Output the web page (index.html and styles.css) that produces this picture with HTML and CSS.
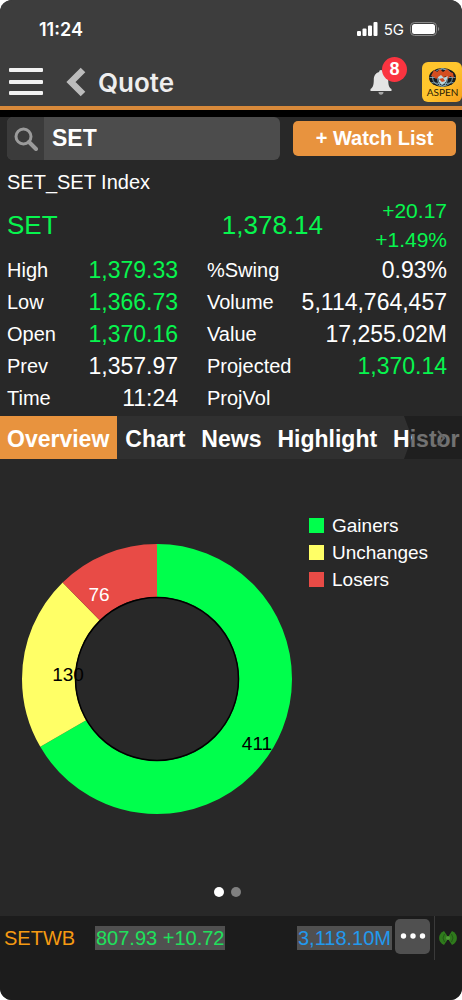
FILE: index.html
```html
<!DOCTYPE html>
<html lang="en">
<head>
    <meta charset="UTF-8">
    <meta name="viewport" content="width=device-width, initial-scale=1.0">
    <title>Quote</title>
    <link rel="stylesheet" href="styles.css">
</head>
<body>
<div class="screen">

    <header class="header">
        <div class="status-bar">
            <span class="clock">11:24</span>
            <div class="status-icons">
                <svg width="21" height="14" viewBox="0 0 21 14" fill="#fff" aria-hidden="true">
                    <rect x="0" y="9" width="4" height="5" rx="1"/>
                    <rect x="5.5" y="6.5" width="4" height="7.5" rx="1"/>
                    <rect x="11" y="3.5" width="4" height="10.5" rx="1"/>
                    <rect x="16.5" y="0" width="4" height="14" rx="1"/>
                </svg>
                <span class="network">5G</span>
                <svg width="30" height="14" viewBox="0 0 30 14" aria-hidden="true">
                    <rect x="0.5" y="0.5" width="26" height="13" rx="4" fill="none" stroke="#888"/>
                    <rect x="2" y="2" width="23" height="10" rx="2.5" fill="#fff"/>
                    <path d="M28 5c1.6.6 1.6 3.4 0 4z" fill="#888"/>
                </svg>
            </div>
        </div>

        <div class="nav">
            <button class="icon-button" aria-label="Menu">
                <svg width="34" height="28" viewBox="0 0 34 28" fill="#f2f2f2">
                    <rect x="0" y="0" width="34" height="4" rx="1"/>
                    <rect x="0" y="12" width="34" height="4" rx="1"/>
                    <rect x="0" y="23" width="34" height="4" rx="1"/>
                </svg>
            </button>
            <button class="icon-button back" aria-label="Back">
                <svg width="20" height="30" viewBox="0 0 20 30">
                    <path d="M17 3 5 15l12 12" fill="none" stroke="#bcbcbc" stroke-width="6.5"/>
                </svg>
            </button>
            <h1>Quote</h1>
            <button class="icon-button bell" aria-label="Notifications">
                <svg width="22" height="25" viewBox="0 0 22 25" fill="#e4e4e4">
                    <path d="M11 0c1.200 0 1.800.8 1.900 1.900 3.700 1 5.300 4 5.300 7.600 0 6 1 8 3.300 9.600V21H.5v-1.900C2.800 17.500 3.800 15.500 3.800 9.500c0-3.600 1.600-6.600 5.300-7.600C9.200.8 9.800 0 11 0z"/>
                    <path d="M8.500 22h5c0 1.700-1.100 2.700-2.500 2.700S8.500 23.700 8.500 22z" fill="#a5a5a5"/>
                </svg>
                <span class="badge">8</span>
            </button>
            <a class="logo" href="#" aria-label="Aspen">
                <svg width="40" height="40" viewBox="0 0 40 40">
                    <defs>
                        <linearGradient id="gold" x1="0" y1="0" x2="1" y2="1">
                            <stop offset="0" stop-color="#ffc52c"/>
                            <stop offset="0.5" stop-color="#ffc62e"/>
                            <stop offset="1" stop-color="#f79d1b"/>
                        </linearGradient>
                    </defs>
                    <rect width="40" height="40" rx="6" fill="url(#gold)"/>
                    <ellipse cx="20.500" cy="15.500" rx="13.500" ry="9.500" fill="#151a1e"/>
                    <g fill="none" stroke="#8eb7ca" stroke-width="0.8">
                        <ellipse cx="20.500" cy="15.500" rx="5" ry="9"/>
                        <ellipse cx="20.500" cy="15.500" rx="10" ry="8.500"/>
                        <path d="M7.500 15.500h26M9.500 20.500q11 3 22 0"/>
                    </g>
                    <path d="M9 14l3-6 3 2 3-3 3 3 4-3 3 3 3 1 1 5-4-2-2 3-3-3-2 4-4-3-3 2-2-2z" fill="#d44e20"/>
                    <path d="M16 15l3-2 3 3 4-2-2 6-4 3-3-3z" fill="#b9d7df"/>
                    <path d="M17 17l4-1 2 3-3 1z" fill="#cf4a22"/>
                    <text class="logo-text" x="20.500" y="34" text-anchor="middle">ASPEN</text>
                </svg>
            </a>
        </div>
    </header>

    <main class="main">
        <div class="search-row">
            <div class="search-box">
                <label class="search-label" for="symbol" aria-label="Symbol">
                    <svg width="24" height="24" viewBox="0 0 24 24" fill="none" stroke="#9b9b9b">
                        <circle cx="9.500" cy="9.500" r="7.500" stroke-width="3"/>
                        <path d="M15 15l7 7" stroke-width="4" stroke-linecap="round"/>
                    </svg>
                </label>
                <input id="symbol" class="search-input" type="text" value="SET">
            </div>
            <button class="watch-button">+ Watch List</button>
        </div>

        <section class="quote">
            <p class="index-name">SET_SET Index</p>
            <div class="price-row up">
                <span>SET</span>
                <span class="price">1,378.14</span>
                <div class="change">
                    <div>+20.17</div>
                    <div>+1.49%</div>
                </div>
            </div>
            <div class="stats">
                <dl>
                    <dt>High</dt><dd class="up">1,379.33</dd>
                    <dt>Low</dt><dd class="up">1,366.73</dd>
                    <dt>Open</dt><dd class="up">1,370.16</dd>
                    <dt>Prev</dt><dd>1,357.97</dd>
                    <dt>Time</dt><dd>11:24</dd>
                </dl>
                <dl>
                    <dt>%Swing</dt><dd>0.93%</dd>
                    <dt>Volume</dt><dd>5,114,764,457</dd>
                    <dt>Value</dt><dd>17,255.02M</dd>
                    <dt>Projected</dt><dd class="up">1,370.14</dd>
                    <dt>ProjVol</dt><dd></dd>
                </dl>
            </div>
        </section>

        <nav class="tabs">
            <button class="tab active">Overview</button>
            <button class="tab">Chart</button>
            <button class="tab">News</button>
            <button class="tab">Highlight</button>
            <button class="tab">Histor</button>
            <span class="tabs-more">
                <svg width="10" height="18" viewBox="0 0 10 18" aria-hidden="true">
                    <path d="M2 2l6 7-6 7" fill="none" stroke="#666" stroke-width="2"/>
                </svg>
            </span>
        </nav>

        <section class="overview">
            <svg class="donut" viewBox="0 0 270 270" role="img" aria-label="Gainers 411, Unchanges 130, Losers 76">
                <!-- each slice is an arc of a circle with pathLength 617 (the total) -->
                <g fill="none" stroke-width="53" transform="rotate(-90 135 135)">
                    <circle cx="135" cy="135" r="108.500" stroke="#00ff4c" pathLength="617" stroke-dasharray="411 206"/>
                    <circle cx="135" cy="135" r="108.500" stroke="#ffff66" pathLength="617" stroke-dasharray="130 487" stroke-dashoffset="-411"/>
                    <circle cx="135" cy="135" r="108.500" stroke="#e84b46" pathLength="617" stroke-dasharray="76 541" stroke-dashoffset="-541"/>
                </g>
                <circle cx="135" cy="135" r="81.500" fill="none" stroke="#000" stroke-width="1.500"/>
                <text x="235" y="206">411</text>
                <text x="46" y="137">130</text>
                <text x="77" y="57" class="light">76</text>
            </svg>
            <ul class="legend">
                <li><span class="swatch gainers"></span>Gainers</li>
                <li><span class="swatch unchanges"></span>Unchanges</li>
                <li><span class="swatch losers"></span>Losers</li>
            </ul>
        </section>

        <div class="pager">
            <span class="dot current"></span>
            <span class="dot"></span>
        </div>
    </main>

    <footer class="ticker">
        <span class="ticker-name">SETWB</span>
        <span class="ticker-price">807.93 +10.72</span>
        <span class="ticker-value">3,118.10M</span>
        <button class="more-button" aria-label="More">
            <svg width="26" height="6" viewBox="0 0 26 6" fill="#fff">
                <circle cx="3.500" cy="3" r="2.700"/>
                <circle cx="13" cy="3" r="2.700"/>
                <circle cx="22.500" cy="3" r="2.700"/>
            </svg>
        </button>
        <div class="signal">
            <svg width="18" height="14" viewBox="0 0 18 14" aria-hidden="true">
                <path d="M5 0C-1.500 2.500-1.500 11.500 5 14l3-4.500v-5z" fill="#2f7a1c"/>
                <path d="M13 0c6.500 2.500 6.500 11.500 0 14l-3-4.500v-5z" fill="#2f7a1c"/>
                <path d="M5.500 3Q2.500 7 5.500 11M12.500 3q3 4 0 8" fill="none" stroke="#225716"/>
                <circle cx="9" cy="7" r="2" fill="#4f9a35"/>
            </svg>
        </div>
    </footer>

</div>
</body>
</html>
```
FILE: styles.css
```css
* {
    box-sizing: border-box;
}
body {
    margin: 0;
    background-color: #ffffff;
    color: #ffffff;
    font-family: "Liberation Sans", Arial, sans-serif;
    font-size: 20px;
}
button {
    font-family: inherit;
    color: inherit;
    border: 0;
    margin: 0;
    cursor: pointer;
}
svg {
    display: block;
}
.screen {
    display: flex;
    flex-direction: column;
    min-height: 100vh;
    background-color: #282828;
    border-radius: 12px;
    overflow: hidden;
}

/* header */
.header {
    background-color: #3d3d3d;
    border-bottom: 4px solid #d8893a;
}
.status-bar {
    display: flex;
    justify-content: space-between;
    align-items: center;
    height: 58px;
    padding: 0 22px 0 39px;
    font-family: Inter, sans-serif;
}
.clock {
    font-size: 18px;
    font-weight: 600;
}
.status-icons {
    display: flex;
    align-items: center;
    gap: 6px;
}
.network {
    font-size: 15px;
}
.nav {
    display: flex;
    align-items: center;
    height: 48px;
    padding-left: 9px;
}
.icon-button {
    background: none;
    padding: 0;
}
.back {
    margin: 0 12px 0 23px;
}
.nav h1 {
    flex: 1;
    margin: 0;
    font-family: Inter, sans-serif;
    font-size: 26px;
    font-weight: 600;
    color: #eeeeee;
}
.bell {
    position: relative;
    margin-right: 30px;
}
.badge {
    position: absolute;
    left: 12px;
    top: -13px;
    width: 25px;
    height: 25px;
    border-radius: 50%;
    background-color: #fa3440;
    font-size: 18px;
    font-weight: bold;
    line-height: 25px;
    text-align: center;
}
.logo-text {
    font-family: Lato, sans-serif;
    font-size: 10px;
    fill: #2b1c05;
}

/* search */
.main {
    flex: 1;
    display: flex;
    flex-direction: column;
    border-top: 7px solid #000000;
}
.search-row {
    display: flex;
    align-items: center;
    gap: 13px;
    padding: 0 6px 0 7px;
}
.search-box {
    flex: 1;
    display: flex;
    min-width: 0;
    height: 43px;
    border-radius: 6px;
    background-color: #4c4c4c;
    overflow: hidden;
}
.search-label {
    display: flex;
    align-items: center;
    justify-content: center;
    width: 37px;
    background-color: #3b3b3b;
}
.search-input {
    flex: 1;
    min-width: 0;
    padding: 0 8px;
    border: 0;
    background: none;
    color: #ffffff;
    font-family: inherit;
    font-size: 23px;
    font-weight: bold;
}
.watch-button {
    width: 163px;
    height: 35px;
    padding: 0;
    border-radius: 5px;
    background-color: #e8933e;
    font-size: 20px;
    font-weight: bold;
}

/* quote */
.quote {
    padding: 8px 15px 0 7px;
}
.up {
    color: #07f54e;
}
.index-name {
    margin: 0;
    font-size: 20px;
    line-height: 28px;
}
.price-row {
    display: grid;
    grid-template-columns: 1fr auto 124px;
    align-items: center;
    font-size: 26px;
}
.change {
    font-size: 21px;
    line-height: 29px;
    text-align: right;
}
.stats {
    display: grid;
    grid-template-columns: 171fr 240fr;
    gap: 29px;
    padding-bottom: 2px;
}
.stats dl {
    display: grid;
    grid-template-columns: auto 1fr;
    grid-auto-rows: 32px;
    align-items: center;
    margin: 0;
}
.stats dd {
    margin: 0;
    font-size: 23px;
    text-align: right;
}

/* tabs */
.tabs {
    position: relative;
    display: flex;
    height: 43px;
    padding-right: 8px;
    background-color: #303030;
    overflow: hidden;
}
.tab {
    flex: none;
    padding: 4px 8px 0;
    background: none;
    font-size: 23px;
    font-weight: bold;
}
.tab.active {
    padding-left: 7px;
    background-color: #e8933e;
}
.tabs-more {
    position: absolute;
    top: 0;
    right: 0;
    bottom: 0;
    display: flex;
    align-items: center;
    width: 58px;
    padding-left: 32px;
    background-color: rgba(20, 20, 20, 0.6);
    clip-path: polygon(0 0, 100% 0, 100% 100%, 0 100%, 8px 50%);
}

/* overview chart */
.overview {
    flex: 1;
    display: flex;
    align-items: flex-start;
    gap: 17px;
    padding: 53px 16px 20px 22px;
}
.donut {
    flex: 1;
    min-width: 0;
    max-width: 360px;
    margin-top: 32px;
    font-size: 19px;
    text-anchor: middle;
}
.donut .light {
    fill: #ffffff;
}
.legend {
    width: 137px;
    margin: 0;
    padding: 0;
    list-style: none;
    font-size: 19px;
}
.legend li {
    display: flex;
    align-items: center;
    gap: 8px;
    height: 27px;
}
.swatch {
    width: 15px;
    height: 15px;
}
.gainers {
    background-color: #00ff4c;
}
.unchanges {
    background-color: #ffff66;
}
.losers {
    background-color: #e84b46;
}
.pager {
    display: flex;
    justify-content: center;
    gap: 7px;
    padding: 0 8px 19px 0;
}
.dot {
    width: 10px;
    height: 10px;
    border-radius: 50%;
    background-color: #808080;
}
.dot.current {
    background-color: #ffffff;
}

/* bottom ticker */
.ticker {
    display: flex;
    align-items: center;
    height: 84px;
    padding: 0 0 40px 4px;
    background-color: #1c1c1c;
}
.ticker-name {
    width: 91px;
    color: #f59a12;
}
.ticker-price,
.ticker-value {
    padding: 0 1px;
    line-height: 24px;
    background-color: #505050;
}
.ticker-price {
    color: #1fe05c;
}
.ticker-value {
    margin-left: auto;
    color: #2299ee;
}
.more-button {
    display: flex;
    align-items: center;
    justify-content: center;
    width: 35px;
    height: 35px;
    margin: 0 4px 4px 3px;
    padding: 0;
    border-radius: 5px;
    background-color: #505050;
}
.signal {
    display: flex;
    align-items: center;
    width: 28px;
    height: 44px;
    padding-left: 4px;
    border-left: 1px solid #3a3a3a;
}
```
